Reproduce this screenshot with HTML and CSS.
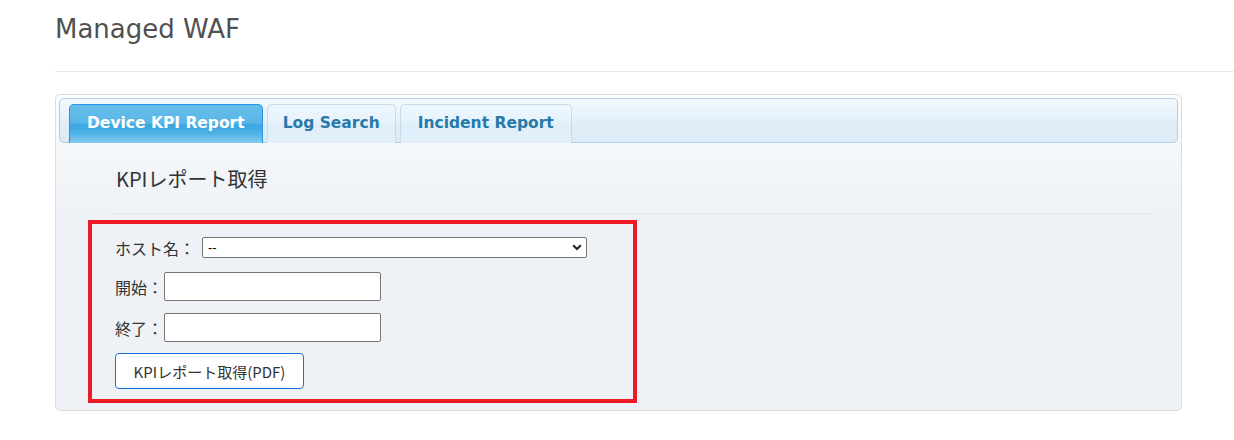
FILE: index.html
```html
<!DOCTYPE html>
<html lang="ja">
<head>
<meta charset="utf-8">
<title>Managed WAF</title>
<link rel="stylesheet" href="styles.css">
</head>
<body>
<div class="page">
  <h1 class="title">Managed WAF</h1>
  <div class="rule"></div>
  <div class="panel">
    <div class="tabbar">
      <div class="tab active">Device KPI Report</div>
      <div class="tab log">Log Search</div>
      <div class="tab">Incident Report</div>
    </div>
    <div class="content">
      <h2 class="heading">KPIレポート取得</h2>
      <div class="subrule"></div>
      <div class="annot">
        <div class="row row-host">
          <label class="lbl">ホスト名：</label>
          <div class="select"><span>--</span>
            <svg class="chev" width="10" height="7" viewBox="0 0 10 7"><path d="M1.2 1.3 L5 5 L8.8 1.3" fill="none" stroke="#222" stroke-width="2"/></svg>
          </div>
        </div>
        <div class="row">
          <label class="lbl">開始：</label>
          <div class="input"></div>
        </div>
        <div class="row">
          <label class="lbl">終了：</label>
          <div class="input"></div>
        </div>
        <div class="row row-btn">
          <button class="btn">KPIレポート取得(PDF)</button>
        </div>
      </div>
    </div>
  </div>
</div>
</body>
</html>
```
FILE: styles.css
```css
html, body {
  margin: 0;
  padding: 0;
  background: #fff;
}
.page {
  padding-left: 55px;
  font-family: "Noto Sans CJK JP", "Noto Sans", sans-serif;
}
.title {
  margin: 0;
  padding-top: 14px;
  height: 30px;
  line-height: 30px;
  font-family: "DejaVu Sans", Verdana, sans-serif;
  font-weight: normal;
  font-size: 26px;
  color: #505050;
}
.rule {
  margin-top: 27px;
  border-top: 1px solid #e8e8e8;
}
.panel {
  margin-top: 22px;
  width: 1127px;
  height: 317px;
  border: 1px solid #dcdcdc;
  border-radius: 5px;
  padding: 3px;
  box-sizing: border-box;
  background: linear-gradient(#fbfcfd 0px, #f3f6f9 70px, #eef2f6 120px, #eef2f6 100%);
}
.tabbar {
  display: flex;
  gap: 4px;
  height: 45px;
  box-sizing: border-box;
  padding: 4px 0 0 9px;
  border: 1px solid #aed0ea;
  border-radius: 5px;
  background: linear-gradient(#f2f8fd 0%, #e6f1fa 45%, #deedf7 55%, #dcebf7 100%);
  align-items: flex-end;
}
.tab {
  height: 39px;
  box-sizing: border-box;
  padding: 0 17px 3px;
  display: flex;
  align-items: center;
  font-family: "DejaVu Sans", Verdana, sans-serif;
  font-weight: bold;
  font-size: 15.5px;
  color: #2779aa;
  border: 1px solid #c5dbec;
  border-bottom: none;
  border-radius: 5px 5px 0 0;
  background: linear-gradient(#eef6fd 0%, #e6f2fb 45%, #deeef9 55%, #e3f0fa 100%);
  margin-bottom: -1px;
}
.tab.log {
  padding: 0 15px 3px;
}
.tab.active {
  color: #fff;
  border-color: #2694e8;
  background: linear-gradient(#66bdea 0%, #5ab6e7 48%, #3aa6e0 52%, #4eb1e5 75%, #86cbef 100%);
}
.content {
  padding: 0 0 0 57px;
}
.heading {
  margin: 0;
  padding-top: 21px;
  height: 30px;
  line-height: 30px;
  font-size: 20px;
  font-weight: normal;
  color: #333;
}
.subrule {
  margin: 19px 24px 0 -4px;
  border-top: 1px solid #e2e5e8;
}
.annot {
  margin: 6px 0 0 -28px;
  width: 549px;
  height: 183px;
  box-sizing: border-box;
  border: 4px solid #ed1c24;
  padding: 13px 0 0 23px;
}
.row {
  display: flex;
  align-items: center;
  height: 29px;
  margin-bottom: 12px;
}
.row-host {
  height: 21px;
  margin-bottom: 14px;
}
.lbl {
  font-size: 16px;
  color: #333;
  line-height: 20px;
}
.row-host .lbl {
  margin-right: 7px;
}
.select {
  width: 385px;
  height: 21px;
  box-sizing: border-box;
  border: 1px solid #767676;
  border-radius: 2px;
  background: #fff;
  display: flex;
  align-items: center;
  justify-content: space-between;
  padding: 0 4px 0 5px;
  font-family: "Liberation Sans", Arial, sans-serif;
  font-size: 13px;
  color: #000;
}
.chev {
  display: block;
}
.input {
  width: 217px;
  height: 29px;
  box-sizing: border-box;
  border: 1px solid #767676;
  border-radius: 2px;
  background: #fff;
  margin-left: 1px;
}
.row-btn {
  height: 36px;
  margin-top: -1px;
}
.btn {
  width: 189px;
  height: 36px;
  box-sizing: border-box;
  border: 1px solid #1a6fe0;
  border-radius: 4px;
  background: #fff;
  font-family: "Noto Sans CJK JP", "Noto Sans", sans-serif;
  font-size: 15px;
  color: #333;
  padding: 0;
}
```
